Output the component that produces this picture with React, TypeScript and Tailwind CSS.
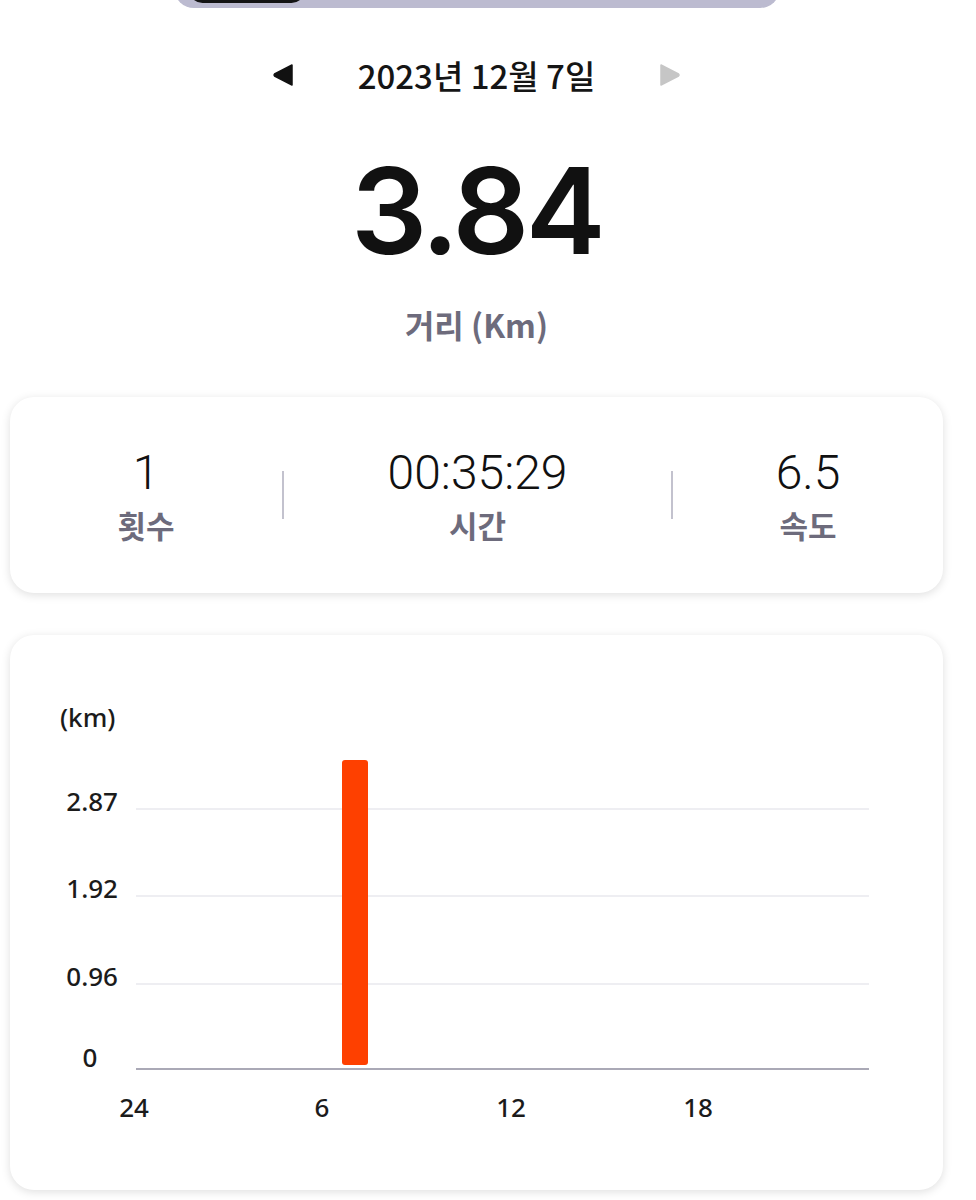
import React from "react";

const KR = '"Noto Sans CJK KR", "Noto Sans", sans-serif';

function Stat({ value, label }: { value: string; label: string }) {
  return (
    <div className="h-full pt-[52px] flex flex-col items-center">
      <div
        className="text-[48px] leading-none font-light text-[#111]"
        style={{ fontFamily: 'Roboto, "Noto Sans CJK KR", sans-serif' }}
      >
        {value}
      </div>
      <div className="mt-[12px] text-[31px] leading-none font-semibold text-[#6d6b7c]" style={{ fontFamily: KR }}>
        {label}
      </div>
    </div>
  );
}

function Chart() {
  const left = 126;
  const right = 859;
  const grid = [
    { y: 174, label: "2.87" },
    { y: 261, label: "1.92" },
    { y: 349, label: "0.96" },
  ];
  const axisY = 434;
  const xs = [
    { x: 124, label: "24" },
    { x: 312, label: "6" },
    { x: 501, label: "12" },
    { x: 688, label: "18" },
  ];
  return (
    <svg width="933" height="555" viewBox="0 0 933 555" className="block">
      <g style={{ fontFamily: '"Noto Sans", Inter, sans-serif' }} fill="#1b1b1b" fontSize="26" fontWeight={500}>
        <text x="50" y="92">(km)</text>
        {grid.map((g) => (
          <g key={g.label}>
            <line x1={left} x2={right} y1={g.y} y2={g.y} stroke="#eeeef2" strokeWidth="2" />
            <text x="108" y={g.y + 2} textAnchor="end">{g.label}</text>
          </g>
        ))}
        <text x="80" y="432" textAnchor="middle">0</text>
        <line x1={left} x2={right} y1={axisY} y2={axisY} stroke="#aaa9b6" strokeWidth="2" />
        {xs.map((t) => (
          <text key={t.label} x={t.x} y="482" textAnchor="middle">{t.label}</text>
        ))}
      </g>
      <rect x="332" y="125" width="26" height="305" rx="3" fill="#fe4000" />
    </svg>
  );
}

export default function App() {
  return (
    <div className="bg-white w-[976px] min-h-[1200px] overflow-hidden" style={{ fontFamily: KR }}>
      <div className="w-[953px]">
        {/* top segmented control (cut off) */}
        <div className="mx-auto -mt-[32px] h-[40px] w-[606px] rounded-[20px] bg-[#bcbbd0] pt-[8px] pl-[15px] pb-[5px] flex">
          <div className="w-[116px] h-full rounded-[16px] bg-[#141414]" />
        </div>

        {/* date row */}
        <div className="mt-[47px] h-[40px] flex items-center justify-center gap-[64px]">
          <svg width="22" height="24" viewBox="0 0 22 24">
            <path d="M20 2 L20 22 L2.5 13 Q1.5 12 2.5 11 Z" fill="#111" stroke="#111" strokeWidth="1.5" strokeLinejoin="round" />
          </svg>
          <div className="text-[33px] leading-[40px] font-medium text-[#151515]" style={{ fontFamily: KR }}>
            2023년 12월 7일
          </div>
          <svg width="22" height="24" viewBox="0 0 22 24">
            <path d="M2 2 L2 22 L19.5 13 Q20.5 12 19.5 11 Z" fill="#c6c6c6" stroke="#c6c6c6" strokeWidth="1.5" strokeLinejoin="round" />
          </svg>
        </div>

        {/* big value */}
        <div className="mt-[56px] flex justify-center">
          <div
            className="text-[120px] leading-[120px] font-semibold text-[#111] tracking-[-0.03em]"
            style={{ fontFamily: 'Inter, "Noto Sans", sans-serif' }}
          >
            3.84
          </div>
        </div>
        <div className="mt-[37px] flex justify-center">
          <div className="text-[32px] leading-none font-semibold text-[#6d6b7c]" style={{ fontFamily: KR }}>
            거리 (Km)
          </div>
        </div>

        {/* stats card */}
        <div className="mt-[57px] ml-[10px] w-[933px] h-[196px] rounded-[24px] bg-white shadow-[0_2px_10px_rgba(0,0,0,0.13)] flex items-center">
          <div className="w-[272px] h-full flex justify-center"><Stat value="1" label="횟수" /></div>
          <div className="w-[2px] h-[48px] bg-[#c3c2ce]" />
          <div className="w-[387px] h-full flex justify-center"><Stat value="00:35:29" label="시간" /></div>
          <div className="w-[2px] h-[48px] bg-[#c3c2ce]" />
          <div className="flex-1 h-full flex justify-center"><Stat value="6.5" label="속도" /></div>
        </div>

        {/* chart card */}
        <div className="mt-[42px] ml-[10px] w-[933px] h-[555px] rounded-[24px] bg-white shadow-[0_2px_10px_rgba(0,0,0,0.13)] overflow-hidden">
          <Chart />
        </div>
      </div>
    </div>
  );
}
